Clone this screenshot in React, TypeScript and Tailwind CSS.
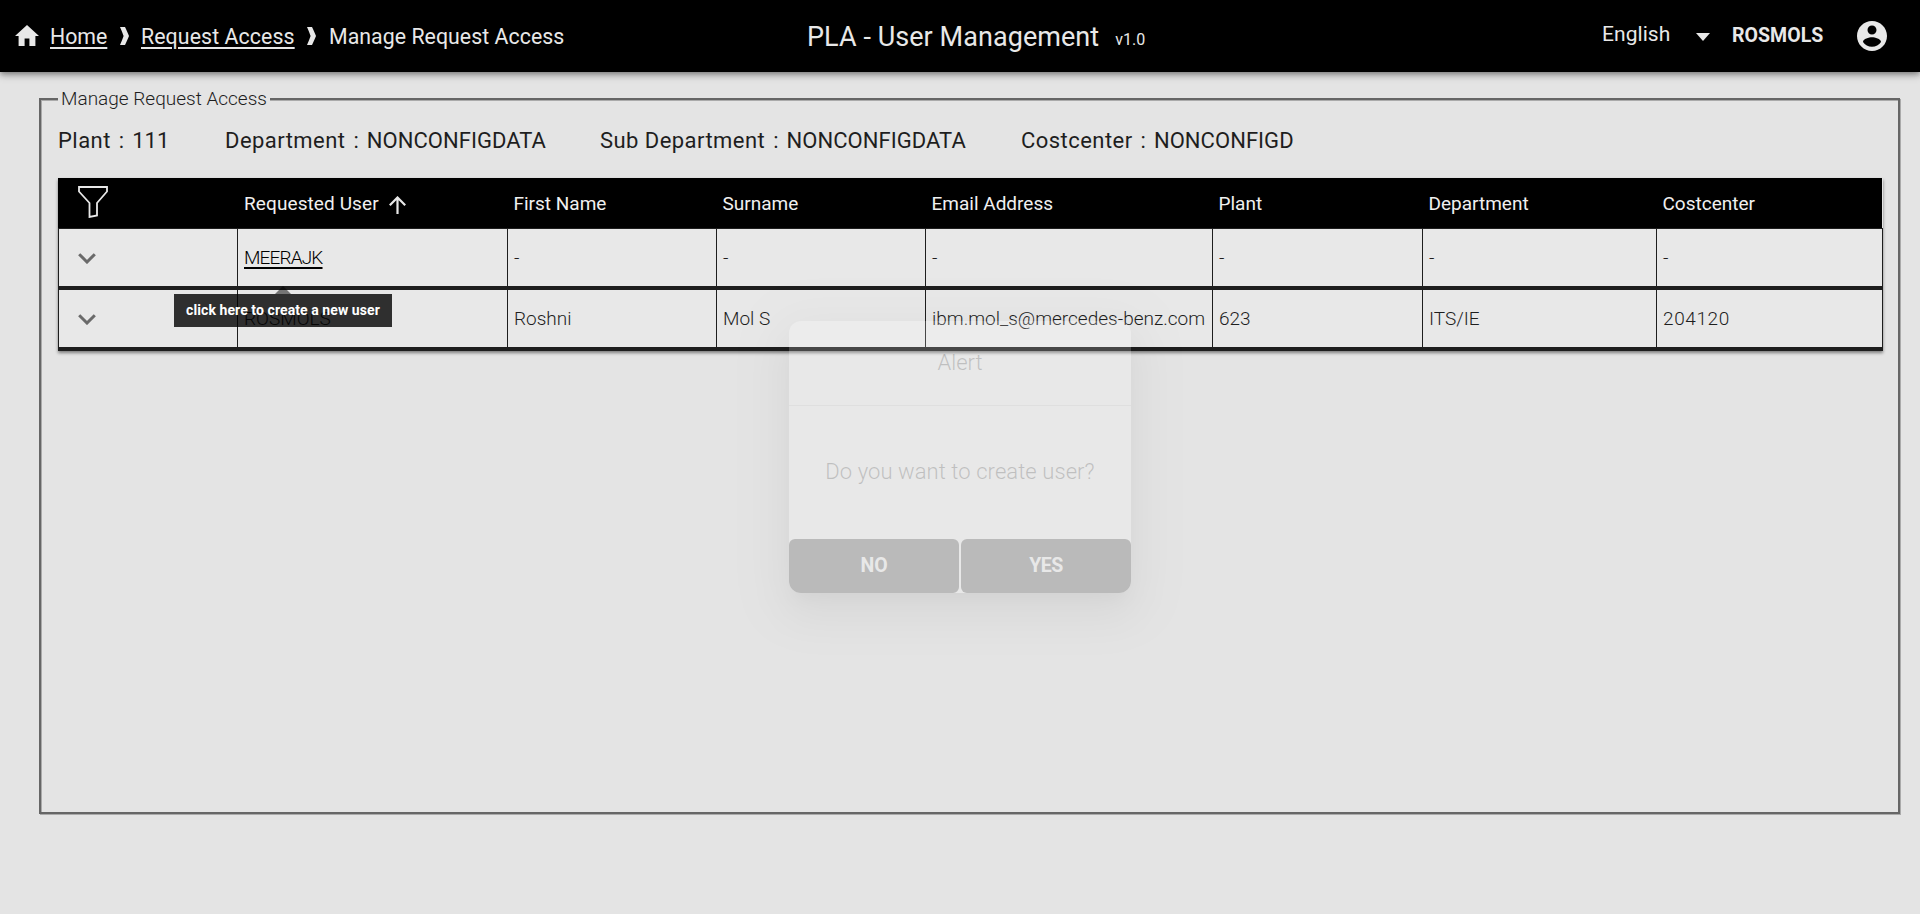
import type { ReactNode } from 'react';

const columns = [
  { label: 'First Name', width: 'w-[209px]' },
  { label: 'Surname', width: 'w-[209px]' },
  { label: 'Email Address', width: 'w-[287px]' },
  { label: 'Plant', width: 'w-[210px]' },
  { label: 'Department', width: 'w-[234px]' },
  { label: 'Costcenter', width: 'w-[227px]' },
];

const filters = [
  { label: 'Plant', value: '111', width: 'w-[167px]' },
  { label: 'Department', value: 'NONCONFIGDATA', width: 'w-[375px]' },
  { label: 'Sub Department', value: 'NONCONFIGDATA', width: 'w-[421px]' },
  { label: 'Costcenter', value: 'NONCONFIGD', width: 'w-[300px]' },
];

function Separator() {
  return (
    <svg className="mt-[27px] h-[18px] w-[9px] shrink-0" viewBox="0 0 9 18" fill="#e8e8e8">
      <path d="M0 0h5c1.300 2.700 2.600 5.500 4 9-1.400 3.500-2.700 6.300-4 9H0c1.300-3 2.600-6 3.600-9C2.600 6 1.300 3 0 0z" />
    </svg>
  );
}

function Header() {
  return (
    <header className="relative z-10 flex h-[72px] bg-black text-[21.300px] leading-[74px] text-[#e8e8e8] shadow-[0_2px_4px_-1px_rgba(0,0,0,0.2),0_4px_5px_rgba(0,0,0,0.14),0_1px_10px_rgba(0,0,0,0.3)]">
      <nav className="flex w-[807px] pl-[15px]">
        <svg className="mt-[25px] h-[21px] w-6 shrink-0" viewBox="2 3 20 17" preserveAspectRatio="none" fill="#e8e8e8">
          <path d="M10 20v-6h4v6h5v-8h3L12 3 2 12h3v8z" />
        </svg>
        <a className="ml-[11px] w-[70px] underline decoration-2 underline-offset-[3px]">Home</a>
        <Separator />
        <a className="ml-3 w-[166px] tracking-[0.100px] underline decoration-2 underline-offset-[3px]">Request Access</a>
        <Separator />
        <span className="ml-[13px] tracking-[0.050px]">Manage Request Access</span>
      </nav>
      <h1 className="flex w-[795px] gap-4">
        <span className="text-[27px] tracking-[0.060px]">PLA - User Management</span>
        <span className="pt-[3px] text-[16px] leading-[74px]">v1.0</span>
      </h1>
      <div className="flex">
        <span className="w-[94px] text-[21px] leading-[68px] tracking-[0.050px]">English</span>
        <svg className="mt-[33px] h-2 w-[14px]" viewBox="0 0 14 8" fill="#e8e8e8">
          <path d="M0 0h14L7 8z" />
        </svg>
        <span className="ml-[22px] w-[125px] text-[19.500px] font-bold leading-[72px] tracking-[0.050px]">ROSMOLS</span>
        <svg className="mt-[21px] h-[30px] w-[30px]" viewBox="2 2 20 20" fill="#e8e8e8">
          <path d="M12 2C6.480 2 2 6.480 2 12s4.480 10 10 10 10-4.480 10-10S17.520 2 12 2zm0 3c1.660 0 3 1.340 3 3s-1.340 3-3 3-3-1.340-3-3 1.340-3 3-3zm0 14.200c-2.500 0-4.710-1.280-6-3.220.030-1.990 4-3.080 6-3.080 1.990 0 5.970 1.090 6 3.080-1.290 1.940-3.500 3.220-6 3.220z" />
        </svg>
      </div>
    </header>
  );
}

function Row({ user, cells }: { user: ReactNode; cells: string[] }) {
  return (
    <div className="flex h-[61px] border-b-4 border-[#1e1e1e] bg-[#e8e8e8] text-[19px] font-light leading-[57px] text-[#1e1e1e]">
      <div className="w-[179px] border-l border-[#1e1e1e] pl-[19px]">
        <svg className="mt-[24px] h-[11px] w-[18px]" viewBox="0 0 18 11" fill="none" stroke="#6a6a6a" strokeWidth="3">
          <path d="M1.200 1.200 9 9l7.800-7.800" />
        </svg>
      </div>
      <div className="w-[270px] border-l border-[#1e1e1e] pl-[6px]">{user}</div>
      {columns.map((c, i) => (
        <div
          key={c.label}
          className={`${c.width} shrink-0 whitespace-nowrap border-l border-[#1e1e1e] pl-[6px] ${i === 5 ? 'border-r tracking-[0.6px]' : ''}`}
        >
          {cells[i]}
        </div>
      ))}
    </div>
  );
}

function Table() {
  return (
    <div className="w-[1825px] shadow-[0_2px_3px_rgba(0,0,0,0.45)]">
      <div className="flex h-[50px] w-[1824px] bg-black text-[19px] leading-[52px] text-[#f0f0f0]">
        <div className="w-[179px] shrink-0 pl-5">
          <svg className="mt-[8px] h-8 w-[30px]" viewBox="0 0 30 32" fill="none" stroke="#e8e8e8" strokeWidth="1.8">
            <path d="M1 1h28v4.500L19 17v12.500l-7.500 1.500V17L1 5.500z" />
          </svg>
        </div>
        <div className="flex w-[270px] shrink-0 pl-[7px]">
          <span className="tracking-[0.100px]">Requested User</span>
          <svg className="ml-[10px] mt-[18px] h-[18px] w-[17px]" viewBox="0 0 17 18" fill="none" stroke="#e8e8e8" strokeWidth="2.200">
            <path d="M8.500 18V1.500M.8 9.200 8.500 1.500l7.700 7.700" />
          </svg>
        </div>
        {columns.map((c) => (
          <div key={c.label} className={`${c.width} shrink-0 pl-[6.500px]`}>
            {c.label}
          </div>
        ))}
      </div>
      <div className="h-px bg-[#1e1e1e]" />
      <Row
        user={
          <a className="relative tracking-[-0.850px] text-black underline decoration-2 underline-offset-[3px]">
            MEERAJK
            <Tooltip />
          </a>
        }
        cells={['-', '-', '-', '-', '-', '-']}
      />
      <Row
        user="ROSMOLS"
        cells={['Roshni', 'Mol S', 'ibm.mol_s@mercedes-benz.com', '623', 'ITS/IE', '204120']}
      />
    </div>
  );
}

function Tooltip() {
  return (
    <span className="absolute left-[-70px] top-[40px] z-10 block w-[218px] tracking-normal">
      <span className="mx-auto block h-0 w-0 border-x-[8px] border-b-8 border-x-transparent border-b-black/50" />
      <span className="block h-[33px] bg-black/80 text-center text-[14px] font-bold leading-[33px] tracking-[0.08px] text-white">
        click here to create a new user
      </span>
    </span>
  );
}

function AlertDialog() {
  return (
    <div
      role="dialog"
      className="absolute left-[789px] top-[321px] z-20 h-[272px] w-[342px] rounded-xl bg-white text-center text-[22px] font-light text-[#1e1e1e] opacity-[0.180] shadow-[0_11px_15px_-7px_rgba(0,0,0,0.2),0_24px_38px_3px_rgba(0,0,0,0.14),0_9px_46px_8px_rgba(0,0,0,0.18)]"
    >
      <div className="h-[85px] border-b border-[#ccc] leading-[84px]">Alert</div>
      <div className="h-[133px] leading-[132px] tracking-[0.080px]">Do you want to create user?</div>
      <div className="flex h-[54px] gap-[2px] text-[19.500px] font-bold leading-[54px] text-white">
        <button className="w-[170px] rounded-md rounded-bl-xl bg-black">NO</button>
        <button className="w-[170px] rounded-md rounded-br-xl bg-black tracking-[-0.500px]">YES</button>
      </div>
    </div>
  );
}

export default function App() {
  return (
    <div className="relative flex h-[914px] w-[1920px] flex-col overflow-hidden bg-[#e4e4e4] font-['Roboto',sans-serif]">
      <Header />
      <fieldset className="ml-[39px] mt-[13px] h-[729px] w-[1861px] min-w-0 border-2 border-[#666] px-[17px] shadow-[1px_1px_0_#aaa,inset_1px_1px_0_#aaa]">
        <legend className="h-7 bg-[#e4e4e4] px-[3px] text-[19px] font-light leading-[28px] text-[#1e1e1e]">
          Manage Request Access
        </legend>
        <div className="flex h-[65px] text-[22px] leading-[56px] text-[#1e1e1e]">
          {filters.map((f) => (
            <div key={f.label} className={`${f.width} flex gap-[8px] whitespace-nowrap`}>
              <span className="tracking-[0.450px]">{f.label}</span>
              <span>:</span>
              <span className="tracking-[0.050px]">{f.value}</span>
            </div>
          ))}
        </div>
        <Table />
      </fieldset>
      <AlertDialog />
    </div>
  );
}
